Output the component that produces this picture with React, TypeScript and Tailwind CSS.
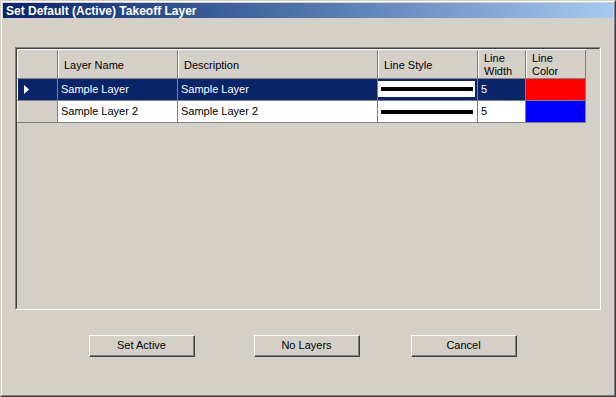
import React from 'react';

const FONT = { fontFamily: '"Liberation Sans", Arial, sans-serif' };

type Layer = { name: string; description: string; width: number; color: string };

const layers: Layer[] = [
  { name: 'Sample Layer', description: 'Sample Layer', width: 5, color: 'bg-[#ff0000]' },
  { name: 'Sample Layer 2', description: 'Sample Layer 2', width: 5, color: 'bg-[#0000ff]' },
];

const HeaderCell: React.FC<{ w: string; children?: React.ReactNode }> = ({ w, children }) => (
  <div className={`${w} h-full shrink-0 flex items-center pl-[5px] pt-[2px] border-l border-l-white border-r border-r-[#808080] leading-[13px]`}>
    {children}
  </div>
);

const Button: React.FC<{ label: string; className?: string }> = ({ label, className }) => (
  <button
    type="button"
    className={`w-[106px] h-[22px] bg-[#d4d0c8] border border-t-white border-l-white border-r-[#404040] border-b-[#404040] text-[11px] text-black ${className ?? ''}`}
  >
    <div className="w-full h-full flex items-center justify-center border-r border-b border-r-[#808080] border-b-[#808080]">
      {label}
    </div>
  </button>
);

const App: React.FC = () => {
  return (
    <div className="w-[616px] h-[397px] bg-[#d4d0c8] overflow-hidden" style={FONT}>
      <div className="w-full h-full border border-t-[#d4d0c8] border-l-[#d4d0c8] border-r-[#404040] border-b-[#404040]">
        <div className="w-full h-full border border-t-white border-l-white border-r-[#808080] border-b-[#808080] flex flex-col">
          {/* title bar */}
          <div className="mx-[1px] mt-[1px] h-[15px] shrink-0 bg-gradient-to-r from-[#0a246a] to-[#a6caf0] flex items-center pl-[3px]">
            <span className="text-white font-bold text-[12px] leading-none">Set Default (Active) Takeoff Layer</span>
          </div>

          {/* grid panel */}
          <div className="ml-[13px] mt-[29px] w-[586px] h-[263px] shrink-0 border border-t-[#808080] border-l-[#808080] border-r-white border-b-white">
            <div className="w-full h-full border border-t-[#404040] border-l-[#404040] border-r-[#d4d0c8] border-b-[#d4d0c8] bg-[#d4d0c8] text-[11px] text-black">
              <div className="w-fit">
                {/* header */}
                <div className="flex h-[30px] border-t border-t-white border-b border-b-[#808080]">
                  <HeaderCell w="w-[41px]" />
                  <HeaderCell w="w-[120px]">Layer Name</HeaderCell>
                  <HeaderCell w="w-[200px]">Description</HeaderCell>
                  <HeaderCell w="w-[100px]">Line Style</HeaderCell>
                  <HeaderCell w="w-[48px]">
                    <span>Line<br />Width</span>
                  </HeaderCell>
                  <HeaderCell w="w-[60px]">
                    <span>Line<br />Color</span>
                  </HeaderCell>
                </div>

                {layers.map((layer, i) => {
                  const selected = i === 0;
                  const cellBg = selected ? 'bg-[#0a246a] text-white' : 'bg-white text-black';
                  return (
                    <div key={layer.name} className="flex h-[22px] border-b border-b-[#808080]">
                      <div
                        className={`w-[41px] shrink-0 flex items-center pl-[6px] border-l border-l-white border-r border-r-[#808080] ${
                          selected ? 'bg-[#0a246a]' : 'bg-[#d4d0c8]'
                        }`}
                      >
                        {selected && (
                          <svg width="5" height="9" viewBox="0 0 5 9">
                            <polygon points="0,0 5,4.5 0,9" fill="#ffffff" />
                          </svg>
                        )}
                      </div>
                      <div className={`w-[120px] shrink-0 flex items-center pl-[3px] border-r border-r-[#808080] ${cellBg}`}>
                        {layer.name}
                      </div>
                      <div className={`w-[200px] shrink-0 flex items-center pl-[3px] border-r border-r-[#808080] ${cellBg}`}>
                        {layer.description}
                      </div>
                      <div className={`w-[100px] shrink-0 border-r border-r-[#808080] ${selected ? 'bg-[#0a246a]' : 'bg-white'}`}>
                        <div
                          className={`bg-white flex items-center pl-[3px] ${
                            selected ? 'mt-[2px] mr-[2px] h-[16px]' : 'h-full'
                          }`}
                        >
                          <div className="w-[92px] h-[4px] bg-black" />
                        </div>
                      </div>
                      <div className={`w-[48px] shrink-0 flex items-center pl-[3px] border-r border-r-[#808080] ${cellBg}`}>
                        {layer.width}
                      </div>
                      <div className={`w-[60px] shrink-0 border-r border-r-[#808080] ${layer.color}`} />
                    </div>
                  );
                })}
              </div>
            </div>
          </div>

          {/* buttons */}
          <div className="flex mt-[25px] text-[11px]">
            <Button label="Set Active" className="ml-[87px]" />
            <Button label="No Layers" className="ml-[59px]" />
            <Button label="Cancel" className="ml-[51px]" />
          </div>
        </div>
      </div>
    </div>
  );
};

export default App;
